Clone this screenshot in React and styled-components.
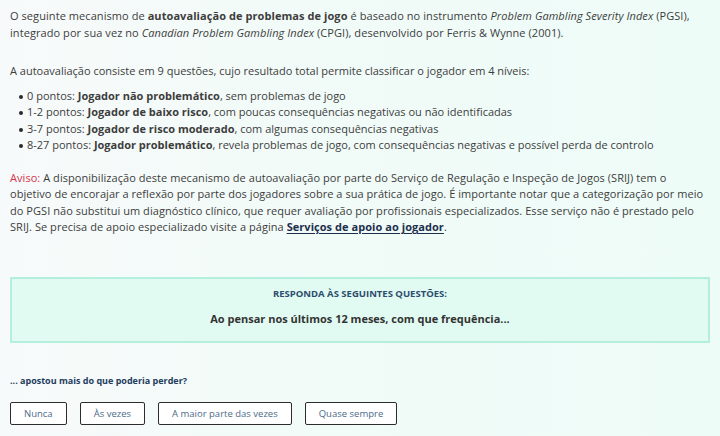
import React from 'react';
import styled, { createGlobalStyle } from 'styled-components';

const GlobalStyle = createGlobalStyle`
  html, body {
    margin: 0;
    padding: 0;
  }
  body {
    width: 720px;
    height: 436px;
    overflow: hidden;
    background: linear-gradient(90deg, #f7fafa 0%, #f1fbf8 45%, #eefcf8 100%);
    font-family: 'Open Sans', 'Noto Sans', sans-serif;
    color: #3d3d3d;
  }
`;

const Page = styled.main`
  padding: 8px 10px 0 10px;
  width: 700px;
`;

const Text = styled.p`
  margin: 0 0 ${({ gap }) => gap || 0}px 0;
  font-size: 11px;
  line-height: 16.5px;
  letter-spacing: ${({ spacing }) => spacing || 0}px;
`;

const List = styled.ul`
  list-style: none;
  margin: 0 0 16px 0;
  padding: 0 0 0 9px;
`;

const Item = styled.li`
  position: relative;
  padding-left: 8px;
  font-size: 11px;
  line-height: 16.5px;
  &::before {
    content: '';
    position: absolute;
    left: 0;
    top: 7px;
    width: 4px;
    height: 4px;
    border-radius: 50%;
    background: #2a2a2a;
  }
`;

const Warn = styled.span`
  color: #d4344a;
`;

const Anchor = styled.a`
  color: #1d2f4d;
  font-weight: 700;
  text-decoration: underline;
  text-underline-offset: 2px;
`;

const QuestionBox = styled.section`
  margin-top: 41px;
  height: 66px;
  border: 2px solid #b4eedc;
  background: #e1fbf2;
  display: flex;
  flex-direction: column;
  align-items: center;
  padding-top: 8px;
  box-sizing: border-box;
`;

const BoxTitle = styled.h2`
  margin: 0;
  font-size: 9.5px;
  font-weight: 700;
  color: #2d4c6e;
  line-height: 14px;
`;

const BoxSub = styled.p`
  margin: 11px 0 0 0;
  font-size: 11px;
  font-weight: 700;
  color: #333;
  line-height: 14px;
`;

const Question = styled.p`
  margin: 31px 0 0 0;
  font-size: 9px;
  font-weight: 700;
  color: #233d5e;
  line-height: 14px;
`;

const Answers = styled.div`
  display: flex;
  gap: 13px;
  margin-top: 14px;
`;

const AnswerButton = styled.button`
  height: 23px;
  padding: 0 13px;
  background: #fff;
  border: 1.5px solid #2c2c2c;
  border-radius: 2px;
  font-family: inherit;
  font-size: 9.5px;
  color: #4d6b8a;
  cursor: pointer;
`;

const levels = [
  ['0 pontos: ', 'Jogador não problemático', ', sem problemas de jogo'],
  ['1-2 pontos: ', 'Jogador de baixo risco', ', com poucas consequências negativas ou não identificadas'],
  ['3-7 pontos: ', 'Jogador de risco moderado', ', com algumas consequências negativas'],
  ['8-27 pontos: ', 'Jogador problemático', ', revela problemas de jogo, com consequências negativas e possível perda de controlo'],
];

const answers = ['Nunca', 'Às vezes', 'A maior parte das vezes', 'Quase sempre'];

const App = () => (
  <>
    <GlobalStyle />
    <Page>
      <Text gap={22} spacing={0.07}>
        O seguinte mecanismo de <b>autoavaliação de problemas de jogo</b> é baseado no instrumento{' '}
        <i>Problem Gambling Severity Index</i> (PGSI), integrado por sua vez no <i>Canadian Problem Gambling Index</i>{' '}
        (CPGI), desenvolvido por Ferris &amp; Wynne (2001).
      </Text>
      <Text gap={8}>
        A autoavaliação consiste em 9 questões, cujo resultado total permite classificar o jogador em 4 níveis:
      </Text>
      <List>
        {levels.map(([pts, label, rest]) => (
          <Item key={label}>
            {pts}
            <b>{label}</b>
            {rest}
          </Item>
        ))}
      </List>
      <Text spacing={0.05}>
        <Warn>Aviso:</Warn> A disponibilização deste mecanismo de autoavaliação por parte do Serviço de Regulação e
        Inspeção de Jogos (SRIJ) tem o objetivo de encorajar a reflexão por parte dos jogadores sobre a sua prática de
        jogo. É importante notar que a categorização por meio do PGSI não substitui um diagnóstico clínico, que requer
        avaliação por profissionais especializados. Esse serviço não é prestado pelo SRIJ. Se precisa de apoio
        especializado visite a página <Anchor href="#">Serviços de apoio ao jogador</Anchor>.
      </Text>
      <QuestionBox>
        <BoxTitle>RESPONDA ÀS SEGUINTES QUESTÕES:</BoxTitle>
        <BoxSub>Ao pensar nos últimos 12 meses, com que frequência...</BoxSub>
      </QuestionBox>
      <Question>... apostou mais do que poderia perder?</Question>
      <Answers>
        {answers.map((a) => (
          <AnswerButton key={a}>{a}</AnswerButton>
        ))}
      </Answers>
    </Page>
  </>
);

export default App;
